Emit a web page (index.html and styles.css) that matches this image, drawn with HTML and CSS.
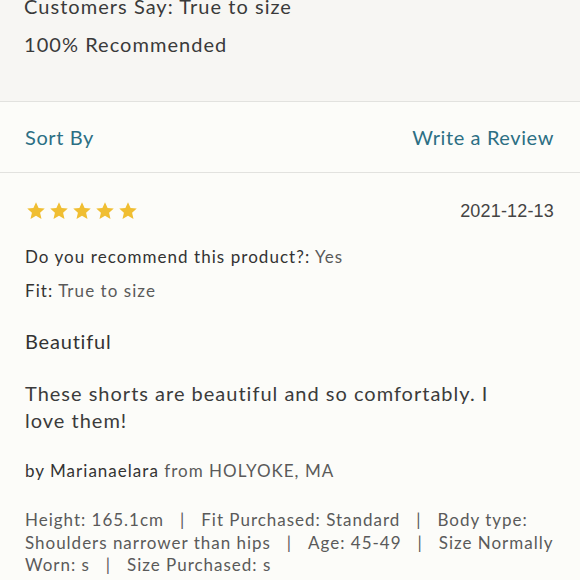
FILE: index.html
```html
<!DOCTYPE html>
<html lang="en">
<head>
<meta charset="utf-8">
<title>Reviews</title>
<link rel="stylesheet" href="styles.css">
</head>
<body>
<section class="summary">
  <p class="summary-line">Customers Say: True to size</p>
  <p class="summary-line">100% Recommended</p>
</section>
<nav class="toolbar">
  <a class="toolbar-link" href="#">Sort By</a>
  <a class="toolbar-link" href="#">Write a Review</a>
</nav>
<article class="review">
  <div class="review-head">
    <div class="stars">
      <svg class="star" viewBox="0 0 24 24"><path d="M12 1.5l3.1 6.9 7.4.7-5.6 5 1.7 7.4L12 17.6l-6.6 3.9 1.7-7.4-5.6-5 7.4-.7z"/></svg>
      <svg class="star" viewBox="0 0 24 24"><path d="M12 1.5l3.1 6.9 7.4.7-5.6 5 1.7 7.4L12 17.6l-6.6 3.9 1.7-7.4-5.6-5 7.4-.7z"/></svg>
      <svg class="star" viewBox="0 0 24 24"><path d="M12 1.5l3.1 6.9 7.4.7-5.6 5 1.7 7.4L12 17.6l-6.6 3.9 1.7-7.4-5.6-5 7.4-.7z"/></svg>
      <svg class="star" viewBox="0 0 24 24"><path d="M12 1.5l3.1 6.9 7.4.7-5.6 5 1.7 7.4L12 17.6l-6.6 3.9 1.7-7.4-5.6-5 7.4-.7z"/></svg>
      <svg class="star" viewBox="0 0 24 24"><path d="M12 1.5l3.1 6.9 7.4.7-5.6 5 1.7 7.4L12 17.6l-6.6 3.9 1.7-7.4-5.6-5 7.4-.7z"/></svg>
    </div>
    <span class="date">2021-12-13</span>
  </div>
  <p class="meta meta-first"><span class="label">Do you recommend this product?:</span> <span class="value">Yes</span></p>
  <p class="meta"><span class="label">Fit:</span> <span class="value">True to size</span></p>
  <h3 class="title">Beautiful</h3>
  <p class="body">These shorts are beautiful and so comfortably. I love them!</p>
  <p class="author"><span class="label">by Marianaelara</span> <span class="value">from HOLYOKE, MA</span></p>
  <p class="details">Height: 165.1cm<span class="sep">|</span>Fit Purchased: Standard<span class="sep">|</span>Body type: Shoulders narrower than hips<span class="sep">|</span>Age: 45-49<span class="sep">|</span>Size Normally Worn: s<span class="sep">|</span>Size Purchased: s</p>
</article>
</body>
</html>
```

FILE: styles.css
```css
html, body {
  margin: 0;
  padding: 0;
  background: #fcfcf9;
}
body {
  font-family: Lato, "Open Sans", sans-serif;
  color: #3b3b3b;
  overflow: hidden;
}
p, h3 { margin: 0; }

.summary {
  background: #f7f6f3;
  margin-top: -13px;
  padding: 0 24px 38px;
  border-bottom: 1px solid #e2e2df;
}
.summary-line {
  font-size: 20px;
  line-height: 38px;
  letter-spacing: 0.052em;
  color: #3a3a3a;
}

.toolbar {
  display: flex;
  justify-content: space-between;
  padding: 0 26px 0 25px;
  height: 70px;
  align-items: center;
  border-bottom: 1px solid #e2e2df;
}
.toolbar-link {
  font-size: 20px;
  line-height: 70px;
  letter-spacing: 0.03em;
  color: #2c6f84;
  text-decoration: none;
}

.review {
  padding: 26px 20px 0 25px;
}
.review-head {
  display: flex;
  justify-content: space-between;
  align-items: center;
  height: 24px;
  padding-right: 6px;
}
.stars {
  display: flex;
  gap: 3px;
  padding-left: 1px;
}
.star {
  width: 20px;
  height: 20px;
  fill: #f0be32;
}
.date {
  font-family: "Liberation Sans", Arial, sans-serif;
  font-size: 18px;
  color: #444;
  letter-spacing: 0.01em;
}

.meta {
  font-size: 17px;
  line-height: 34px;
  letter-spacing: 0.062em;
}
.meta-first { margin-top: 17px; }
.label { color: #333; }
.value { color: #5a5a5a; }

.title {
  font-weight: normal;
  font-size: 20px;
  line-height: 26px;
  letter-spacing: 0.04em;
  margin-top: 20px;
  color: #333;
}
.body {
  font-size: 20px;
  line-height: 27px;
  letter-spacing: 0.05em;
  margin-top: 26px;
  max-width: 480px;
  color: #3b3b3b;
}
.author {
  font-size: 17px;
  line-height: 24px;
  letter-spacing: 0.06em;
  margin-top: 25px;
}
.details {
  font-size: 17px;
  line-height: 22.5px;
  letter-spacing: 0.058em;
  margin-top: 26px;
  max-width: 535px;
  color: #5a5a5a;
}
.sep {
  margin: 0 16px;
}
```
